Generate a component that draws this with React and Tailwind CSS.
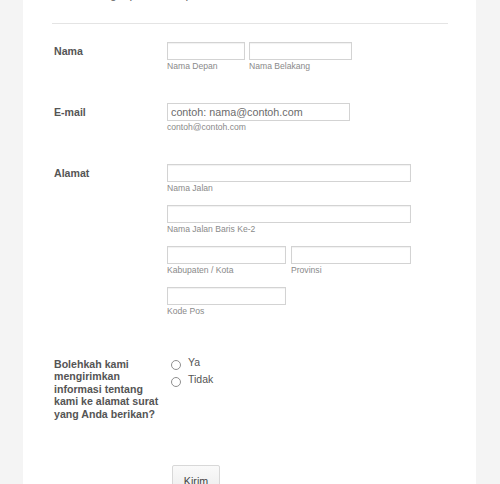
import React from 'react';

// --- Petits composants du formulaire ---
const Field = ({ width, sub, className = '' }) => (
  <div className={`flex flex-col ${className}`} style={{ width }}>
    <div className="h-[18px] w-full border border-[#d3d3d3] bg-white shadow-[inset_0_1px_1px_rgba(0,0,0,0.06)]" />
    {sub && <span className="mt-[1px] text-[8.6px] leading-[10px] text-[#8a8a8a]">{sub}</span>}
  </div>
);

const Row = ({ label, children, className = '' }) => (
  <div className={`flex ${className}`}>
    <div className="w-[115px] shrink-0 pl-[2px] pt-[3px] pr-[3px] text-[10.6px] font-bold leading-[12.4px] text-[#555]">
      {label}
    </div>
    <div className="flex-1">{children}</div>
  </div>
);

const Radio = ({ label }) => (
  <label className="flex h-[17.5px] items-center">
    <span className="ml-[4px] h-[10px] w-[10px] rounded-full border border-[#8f8f8f] bg-white" />
    <span className="ml-[7px] -mt-[4px] text-[10.5px] text-[#555]">{label}</span>
  </label>
);

export default function App() {
  return (
    <div className="h-[484px] overflow-hidden bg-[#f4f4f4] font-['Liberation_Sans',Arial,sans-serif]">
      <div className="ml-[23px] h-full w-[453px] bg-white px-[29px]">
        {/* en-tête coupé */}
        <div className="h-[23px] overflow-hidden">
          <p className="-mt-[12px] pl-[2px] text-[12px] leading-[12px] text-[#666]">
            Mohon lengkapi formulir pendaftaran di bawah ini
          </p>
        </div>
        <div className="h-px w-[396px] bg-[#e4e4e4]" />

        <Row label="Nama" className="mt-[18px]">
          <div className="flex gap-[4px]">
            <Field width="78px" sub="Nama Depan" />
            <Field width="103px" sub="Nama Belakang" />
          </div>
        </Row>

        <Row label="E-mail" className="mt-[32px]">
          <div className="flex w-[183px] flex-col">
            <div className="flex h-[18px] items-center border border-[#d3d3d3] px-[3px] text-[10.75px] text-[#6b6b6b]">
              contoh: nama@contoh.com
            </div>
            <span className="mt-[1px] text-[8.6px] leading-[10px] text-[#8a8a8a]">contoh@contoh.com</span>
          </div>
        </Row>

        <Row label="Alamat" className="mt-[32px]">
          <div className="flex flex-col gap-[12px]">
            <Field width="244px" sub="Nama Jalan" />
            <Field width="244px" sub="Nama Jalan Baris Ke-2" />
            <div className="flex gap-[5px]">
              <Field width="119px" sub="Kabupaten / Kota" />
              <Field width="120px" sub="Provinsi" />
            </div>
            <Field width="119px" sub="Kode Pos" />
          </div>
        </Row>

        <Row
          label={<span className="block w-[108px]">Bolehkah kami mengirimkan informasi tentang kami ke alamat surat yang Anda berikan?</span>}
          className="mt-[39px]"
        >
          <div className="flex flex-col pt-[1px]">
            <Radio label="Ya" />
            <Radio label="Tidak" />
          </div>
        </Row>

        <div className="mt-[45px] pl-[120px]">
          <button className="h-[30px] w-[48px] rounded-[2px] border border-[#d8d8d8] bg-gradient-to-b from-[#fafafa] to-[#ececec] pt-[1px] text-[10.7px] text-[#444]">
            Kirim
          </button>
        </div>
      </div>
    </div>
  );
}
